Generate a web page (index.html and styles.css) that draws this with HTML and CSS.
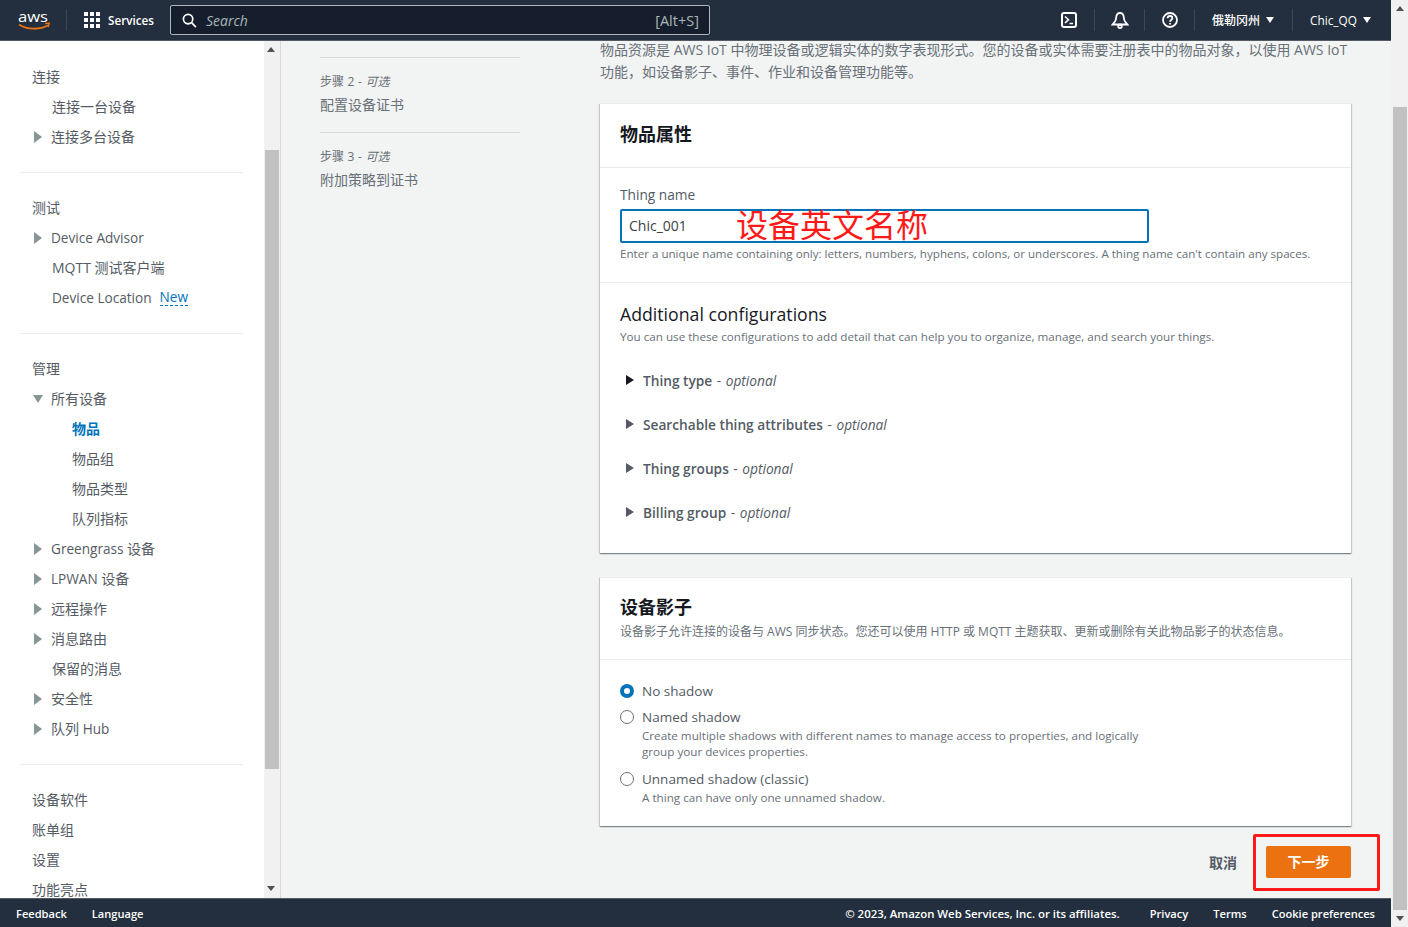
FILE: index.html
```html
<!DOCTYPE html>
<html lang="zh-CN">
<head>
    <meta charset="UTF-8">
    <title>Create things | AWS IoT</title>
    <link rel="stylesheet" href="styles.css">
</head>
<body>
    <div class="app">
        <header class="topbar">
            <svg class="aws-logo" viewBox="0 0 34 30" width="34" height="30">
                <text x="1" y="17" class="aws-word" textLength="30" lengthAdjust="spacingAndGlyphs">aws</text>
                <path d="M2 19.500c8 5.500 21 5.500 29 .8" fill="none" stroke="#ec7211" stroke-width="1.800"/>
                <path d="M28 18.600l4.200-.6-1 4.200" fill="none" stroke="#ec7211" stroke-width="1.400"/>
            </svg>
            <span class="topbar-sep"></span>
            <span class="services">
                <svg viewBox="0 0 16 16" width="16" height="16" fill="#fff">
                    <rect x="0" y="0" width="4" height="4"/><rect x="6" y="0" width="4" height="4"/><rect x="12" y="0" width="4" height="4"/>
                    <rect x="0" y="6" width="4" height="4"/><rect x="6" y="6" width="4" height="4"/><rect x="12" y="6" width="4" height="4"/>
                    <rect x="0" y="12" width="4" height="4"/><rect x="6" y="12" width="4" height="4"/><rect x="12" y="12" width="4" height="4"/>
                </svg>
                Services
            </span>
            <div class="searchbox">
                <svg viewBox="0 0 16 16" width="15" height="15" fill="none" stroke="#fff" stroke-width="1.800">
                    <circle cx="6.500" cy="6.500" r="5"/><path d="M10.200 10.200l4.600 4.800"/>
                </svg>
                <span class="search-text">Search</span>
                <span class="search-key">[Alt+S]</span>
            </div>
            <div class="topbar-right">
                <span class="top-item icon-item">
                    <svg viewBox="0 0 16 16" width="16" height="16" fill="none" stroke="#fff" stroke-width="2">
                        <rect x="1" y="1" width="14" height="14" rx="2"/><path d="M4 4.500l3.500 3.200L4 11M8.500 11.500H12" stroke-width="1.600"/>
                    </svg>
                </span>
                <span class="top-item icon-item">
                    <svg viewBox="0 0 18 18" width="18" height="18" fill="none" stroke="#fff" stroke-width="1.800">
                        <path d="M1.500 13.500h15L14 10.500c-.8-1-1-2-1.100-3.500C12.700 4 11.300 2 9 2S5.300 4 5.100 7C5 8.500 4.800 9.500 4 10.500z"/>
                        <circle cx="9" cy="15.300" r="1.800"/>
                    </svg>
                </span>
                <span class="top-item icon-item">
                    <svg viewBox="0 0 16 16" width="16" height="16" fill="none" stroke="#fff" stroke-width="1.800">
                        <circle cx="8" cy="8" r="7"/><path d="M5.600 6.200C5.700 4.800 6.700 4 8 4s2.400.8 2.400 2.100c0 1.800-2.400 1.900-2.400 3.700"/><path d="M8 11v1.600"/>
                    </svg>
                </span>
                <span class="top-item region">俄勒冈州<i class="caret"></i></span>
                <span class="top-item last">Chic_QQ<i class="caret"></i></span>
            </div>
        </header>

        <div class="workspace">
            <nav class="sidebar">
                <div class="nav-list">
                    <a class="nav-head">连接</a>
                    <a class="nav-sub">连接一台设备</a>
                    <a class="nav-expand"><i class="tri-right"></i>连接多台设备</a>
                    <hr class="nav-rule">
                    <a class="nav-head">测试</a>
                    <a class="nav-expand"><i class="tri-right"></i><span class="en">Device Advisor</span></a>
                    <a class="nav-sub">MQTT 测试客户端</a>
                    <a class="nav-sub"><span class="en">Device Location</span><span class="en new-tag">New</span></a>
                    <hr class="nav-rule">
                    <a class="nav-head">管理</a>
                    <a class="nav-expand"><i class="tri-down"></i>所有设备</a>
                    <a class="nav-leaf active">物品</a>
                    <a class="nav-leaf">物品组</a>
                    <a class="nav-leaf">物品类型</a>
                    <a class="nav-leaf">队列指标</a>
                    <a class="nav-expand"><i class="tri-right"></i><span class="en">Greengrass </span>设备</a>
                    <a class="nav-expand"><i class="tri-right"></i><span class="en">LPWAN </span>设备</a>
                    <a class="nav-expand"><i class="tri-right"></i>远程操作</a>
                    <a class="nav-expand"><i class="tri-right"></i>消息路由</a>
                    <a class="nav-sub">保留的消息</a>
                    <a class="nav-expand"><i class="tri-right"></i>安全性</a>
                    <a class="nav-expand"><i class="tri-right"></i>队列 <span class="en">Hub</span></a>
                    <hr class="nav-rule">
                    <a class="nav-head">设备软件</a>
                    <a class="nav-head">账单组</a>
                    <a class="nav-head">设置</a>
                    <a class="nav-head">功能亮点</a>
                </div>
            </nav>
            <div class="nav-scroll">
                <i class="arrow-up"></i>
                <div class="nav-thumb"></div>
                <i class="arrow-down"></i>
            </div>

            <main class="main">
                <aside class="steps">
                    <div class="step">
                        <div class="step-label">步骤 2 - <em>可选</em></div>
                        <div class="step-name">配置设备证书</div>
                    </div>
                    <div class="step">
                        <div class="step-label">步骤 3 - <em>可选</em></div>
                        <div class="step-name">附加策略到证书</div>
                    </div>
                </aside>

                <section class="content">
                    <p class="intro">物品资源是 AWS IoT 中物理设备或逻辑实体的数字表现形式。您的设备或实体需要注册表中的物品对象，以使用 AWS IoT 功能，如设备影子、事件、作业和设备管理功能等。</p>

                    <div class="card">
                        <div class="card-head">
                            <h2>物品属性</h2>
                        </div>
                        <div class="field-block">
                            <label class="field-label">Thing name</label>
                            <div class="input-wrap">
                                <div class="text-input">Chic_001</div>
                                <span class="red-note">设备英文名称</span>
                            </div>
                            <p class="hint">Enter a unique name containing only: letters, numbers, hyphens, colons, or underscores. A thing name can't contain any spaces.</p>
                        </div>
                        <div class="config-block">
                            <h3>Additional configurations</h3>
                            <p class="hint">You can use these configurations to add detail that can help you to organize, manage, and search your things.</p>
                            <div class="expander"><i class="tri-dark"></i><b>Thing type</b> - <em>optional</em></div>
                            <div class="expander"><i class="tri-dark"></i><b>Searchable thing attributes</b> - <em>optional</em></div>
                            <div class="expander"><i class="tri-dark"></i><b>Thing groups</b> - <em>optional</em></div>
                            <div class="expander"><i class="tri-dark"></i><b>Billing group</b> - <em>optional</em></div>
                        </div>
                    </div>

                    <div class="card shadow-card">
                        <div class="card-head small">
                            <h2>设备影子</h2>
                            <p class="hint cn">设备影子允许连接的设备与 AWS 同步状态。您还可以使用 HTTP 或 MQTT 主题获取、更新或删除有关此物品影子的状态信息。</p>
                        </div>
                        <div class="radio-block">
                            <div class="radio-row">
                                <i class="radio checked"></i>
                                <div class="radio-text"><div>No shadow</div></div>
                            </div>
                            <div class="radio-row">
                                <i class="radio"></i>
                                <div class="radio-text">
                                    <div>Named shadow</div>
                                    <p class="hint">Create multiple shadows with different names to manage access to properties, and logically<br>group your devices properties.</p>
                                </div>
                            </div>
                            <div class="radio-row">
                                <i class="radio"></i>
                                <div class="radio-text">
                                    <div>Unnamed shadow (classic)</div>
                                    <p class="hint">A thing can have only one unnamed shadow.</p>
                                </div>
                            </div>
                        </div>
                    </div>

                    <div class="actions">
                        <a class="cancel">取消</a>
                        <a class="next">下一步</a>
                        <span class="red-box"></span>
                    </div>
                </section>
            </main>
        </div>

        <footer class="footer">
            <span>Feedback</span>
            <span>Language</span>
            <span class="footer-copy">© 2023, Amazon Web Services, Inc. or its affiliates.</span>
            <span>Privacy</span>
            <span>Terms</span>
            <span>Cookie preferences</span>
        </footer>
    </div>

    <div class="page-scroll">
        <i class="arrow-up"></i>
        <div class="page-thumb"></div>
        <i class="arrow-down"></i>
    </div>
</body>
</html>
```

FILE: styles.css
```css
* {
    box-sizing: border-box;
}
html, body {
    height: 100%;
}
body {
    margin: 0;
    display: flex;
    height: 927px;
    overflow: hidden;
    font-family: "Open Sans", "Noto Sans CJK SC", sans-serif;
    font-size: 14px;
    color: #545b64;
    background-color: #f2f3f3;
}
p, h2, h3 {
    margin: 0;
}
.en {
    font-size: 13.6px;
}
.app {
    width: 1391px;
    height: 927px;
    display: flex;
    flex-direction: column;
}

/* top bar */
.topbar {
    height: 41px;
    flex: none;
    display: flex;
    align-items: center;
    padding-left: 17px;
    background-color: #232f3e;
    border-bottom: 1px solid #545b64;
    color: #fff;
    font-size: 12px;
}
.aws-logo {
    flex: none;
}
.aws-word {
    font-family: "Open Sans", sans-serif;
    font-size: 15px;
    fill: #fff;
}
.topbar-sep {
    width: 1px;
    height: 22px;
    margin: 0 17px 0 15px;
    background-color: #414750;
}
.services {
    display: flex;
    align-items: center;
    gap: 8px;
    font-size: 11.7px;
    font-weight: 600;
}
.searchbox {
    width: 540px;
    height: 30px;
    margin-left: 16px;
    padding: 0 10px 0 11px;
    display: flex;
    align-items: center;
    background-color: #161e2d;
    border: 1px solid #aab7b8;
    border-radius: 2px;
}
.search-text {
    margin-left: 9px;
    flex: 1;
    font-style: italic;
    font-size: 14px;
    color: #aab7b8;
}
.search-key {
    font-size: 14.5px;
    color: #aab7b8;
}
.topbar-right {
    margin-left: auto;
    display: flex;
    align-items: center;
    height: 22px;
}
.top-item {
    height: 22px;
    display: flex;
    align-items: center;
    border-left: 1px solid #414750;
    font-weight: 500;
}
.top-item:first-child {
    border-left: none;
}
.top-item.icon-item {
    width: 50px;
    padding: 0;
    justify-content: center;
}
.top-item.region {
    width: 98px;
    padding-left: 17px;
}
.top-item.last {
    width: 99px;
    padding-left: 17px;
    font-size: 11.8px;
}
.caret {
    margin-left: 6px;
    border-left: 4.5px solid transparent;
    border-right: 4.5px solid transparent;
    border-top: 6px solid #fff;
}

/* left nav */
.workspace {
    flex: 1;
    min-height: 0;
    display: flex;
}
.sidebar {
    width: 264px;
    flex: none;
    overflow: hidden;
    background-color: #fff;
}
.nav-list {
    padding: 21px 21px 0 20px;
}
.nav-list a {
    display: flex;
    align-items: center;
    height: 30px;
    padding-bottom: 2px;
    white-space: pre;
    color: #545b64;
}
.nav-head {
    padding-left: 12px;
}
.nav-sub {
    padding-left: 32px;
}
.nav-expand {
    padding-left: 14px;
}
.nav-leaf {
    padding-left: 52px;
}
.nav-list a.active {
    color: #0073bb;
    font-weight: 700;
}
.nav-rule {
    margin: 20px 0;
    border: none;
    border-top: 1px solid #eaeded;
}
.new-tag {
    color: #0073bb;
    border-bottom: 1px dashed #0073bb;
    line-height: 17px;
    margin-left: 8px;
}
.tri-right {
    width: 0;
    margin: 2px 9px 0 0;
    border-top: 6px solid transparent;
    border-bottom: 6px solid transparent;
    border-left: 8px solid #879596;
}
.tri-down {
    width: 0;
    margin: 2px 8px 0 -1px;
    border-left: 5.5px solid transparent;
    border-right: 5.5px solid transparent;
    border-top: 8px solid #879596;
}
.nav-scroll {
    width: 17px;
    flex: none;
    display: flex;
    flex-direction: column;
    align-items: center;
    background-color: #f1f1f1;
    border-right: 1px solid #d5dbdb;
}
.nav-thumb {
    width: 14px;
    height: 619px;
    margin-top: 98px;
    margin-right: 1px;
    background-color: #c1c1c1;
}
.nav-scroll .arrow-up {
    margin: 6px 2px 0 0;
}
.nav-scroll .arrow-down {
    margin: 117px 2px 0 0;
}
.arrow-up {
    border-left: 4px solid transparent;
    border-right: 4px solid transparent;
    border-bottom: 5px solid #505050;
}
.arrow-down {
    border-left: 4px solid transparent;
    border-right: 4px solid transparent;
    border-top: 5px solid #505050;
}

/* main area */
.main {
    flex: 1;
    min-width: 0;
    overflow: hidden;
    display: flex;
    padding-left: 39px;
}
.steps {
    width: 200px;
    flex: none;
    margin-right: 80px;
    padding-top: 16px;
}
.step {
    height: 75px;
    padding-top: 15px;
    border-top: 1px solid #d5dbdb;
}
.step-label {
    font-size: 12px;
    line-height: 18px;
    word-spacing: .5px;
    color: #687078;
}
.step-name {
    margin-top: 3px;
    line-height: 22px;
    color: #687078;
}
.content {
    width: 752px;
    flex: none;
}
.intro {
    width: 751px;
    height: 63px;
    padding-right: 2px;
    margin-top: -2px;
    line-height: 22px;
    color: #687078;
}
.card {
    margin-top: 1px;
    width: 751px;
    background-color: #fff;
    border-top: 1px solid #eaeded;
    box-shadow: 0 1px 1px 0 rgba(0, 28, 36, .3), 1px 1px 1px 0 rgba(0, 28, 36, .15), -1px 1px 1px 0 rgba(0, 28, 36, .15);
}
.card-head {
    height: 64px;
    padding: 18px 20px 0;
    border-bottom: 1px solid #eaeded;
}
.card-head h2 {
    font-size: 18px;
    line-height: 24px;
    font-weight: 700;
    color: #16191f;
}
.card-head.small {
    height: 82px;
    padding-top: 17px;
}
.hint.cn {
    margin-top: 5px;
    font-size: 12px;
}
.field-block {
    height: 115px;
    padding: 16px 20px 0;
    border-bottom: 1px solid #eaeded;
}
.field-label {
    display: block;
    font-size: 13.7px;
    line-height: 22px;
    color: #545b64;
}
.input-wrap {
    position: relative;
}
.text-input {
    width: 529px;
    height: 34px;
    margin-top: 3px;
    padding-left: 7px;
    line-height: 30px;
    border: 2px solid #0073bb;
    border-radius: 2px;
    color: #3b4149;
}
.red-note {
    position: absolute;
    left: 116px;
    top: -8px;
    font-size: 32px;
    line-height: 48px;
    color: #ff1a1a;
    white-space: nowrap;
}
.hint {
    font-size: 11.67px;
    line-height: 16px;
    color: #687078;
}
.field-block .hint {
    margin-top: 3px;
    font-size: 11.6px;
}
.config-block {
    height: 270px;
    padding: 18px 20px 0;
}
.config-block h3 {
    font-size: 17.7px;
    line-height: 26px;
    font-weight: 400;
    color: #16191f;
}
.config-block .hint {
    margin-top: 2px;
    margin-bottom: 13px;
}
.expander {
    height: 44px;
    display: flex;
    align-items: center;
    font-size: 13.7px;
    word-spacing: 1px;
    white-space: pre;
    color: #545b64;
}
.expander b {
    font-weight: 600;
    word-spacing: 0;
}
.tri-dark {
    margin: 0 9px 0 6px;
    border-top: 5.5px solid transparent;
    border-bottom: 5.5px solid transparent;
    border-left: 8px solid #545b64;
}
.expander:first-of-type .tri-dark {
    border-left-color: #16191f;
}
.shadow-card {
    margin-top: 24px;
}
.radio-block {
    padding: 20px 20px 0;
    height: 166px;
}
.radio-row {
    display: flex;
    margin-bottom: 4px;
}
.radio {
    flex: none;
    width: 14px;
    height: 14px;
    margin: 4px 8px 0 0;
    border: 1px solid #687078;
    border-radius: 50%;
    background-color: #fff;
}
.radio.checked {
    border: 4px solid #0073bb;
}
.radio-text {
    font-size: 13.5px;
    line-height: 22px;
    color: #545b64;
}
.radio-text .hint {
    margin-bottom: 4px;
}
.actions {
    position: relative;
    width: 751px;
    margin-top: 20px;
    display: flex;
    justify-content: flex-end;
    align-items: center;
    gap: 29px;
}
.cancel {
    font-weight: 700;
    color: #545b64;
}
.next {
    width: 85px;
    height: 32px;
    line-height: 31px;
    text-align: center;
    font-weight: 700;
    color: #fff;
    background-color: #ec7211;
    border-radius: 2px;
}
.red-box {
    position: absolute;
    left: 653px;
    top: -12px;
    width: 127px;
    height: 57px;
    border: 3px solid #ff1a1a;
    border-radius: 2px;
}

/* footer */
.footer {
    height: 29px;
    flex: none;
    display: flex;
    align-items: center;
    gap: 25px;
    padding: 0 16px;
    background-color: #232f3e;
    border-top: 1px solid #545b64;
    color: #fff;
    font-size: 11.1px;
    font-weight: 600;
}
.footer-copy {
    margin-left: auto;
    margin-right: 5px;
    font-size: 11.4px;
}

/* page scrollbar */
.page-scroll {
    width: 17px;
    flex: none;
    height: 927px;
    display: flex;
    flex-direction: column;
    align-items: center;
    background-color: #f1f1f1;
}
.page-scroll .arrow-up {
    margin-top: 6px;
}
.page-scroll .arrow-down {
    margin-top: 6px;
}
.page-thumb {
    width: 14px;
    height: 803px;
    margin-top: 96px;
    background-color: #c1c1c1;
}
```
